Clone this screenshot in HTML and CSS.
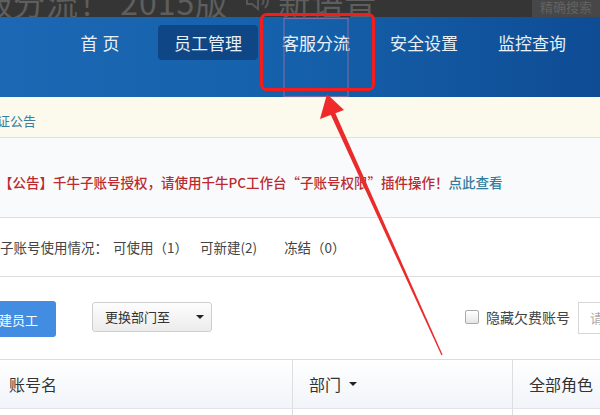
FILE: index.html
```html
<!DOCTYPE html>
<html lang="zh-CN">
<head>
    <meta charset="utf-8">
    <title>员工管理</title>
    <link rel="stylesheet" href="styles.css">
</head>
<body>
    <div class="topbar">
        <div class="topbar-title">
            服分流！ 2015版
            <svg class="speaker" width="28" height="20" viewBox="0 0 28 20">
                <path d="M3 7h5l6-5v16l-6-5H3z" fill="none" stroke="#585858" stroke-width="2"/>
                <path d="M18 6q3 4 0 8M21 3q6 7 0 14" fill="none" stroke="#585858" stroke-width="2"/>
            </svg>
            新语音
        </div>
        <div class="topbar-box">精确搜索</div>
    </div>

    <div class="nav">
        <a class="nav-item nav-home">首页</a>
        <a class="nav-item active">员工管理</a>
        <a class="nav-item">客服分流</a>
        <a class="nav-item">安全设置</a>
        <a class="nav-item">监控查询</a>
    </div>

    <div class="notice-bar">验证公告</div>

    <div class="announce">
        <span class="announce-red">【公告】千牛子账号授权，请使用千牛PC工作台“子账号权限”插件操作！</span><a class="announce-link">点此查看</a>
    </div>

    <div class="usage">
        <span class="usage-label">子账号使用情况：</span>
        <span class="usage-item usable">可使用（1）</span>
        <span class="usage-item creatable">可新建(2)</span>
        <span class="usage-item frozen">冻结（0）</span>
    </div>

    <div class="toolbar">
        <button class="btn-primary">新建员工</button>
        <div class="select">更换部门至<span class="caret"></span></div>
        <label class="check">
            <span class="check-box"></span>
            隐藏欠费账号
        </label>
        <div class="search-input">请输入账号</div>
    </div>

    <div class="table">
        <div class="table-head">
            <div class="col col-name">账号名</div>
            <div class="col col-dept">部门<span class="caret"></span></div>
            <div class="col col-role">全部角色</div>
        </div>
        <div class="table-row">
            <div class="col col-name"></div>
            <div class="col col-dept"></div>
            <div class="col col-role"></div>
        </div>
    </div>

    <!-- annotation drawn over the screenshot -->
    <svg class="annotation" width="600" height="415" viewBox="0 0 600 415">
        <rect x="284" y="18.5" width="64" height="78" fill="none" stroke="#8e6f9f" stroke-width="1.2" opacity="0.8"/>
        <rect x="261.5" y="14.5" width="112" height="75" rx="5" fill="none" stroke="#f21d1d" stroke-width="3"/>
        <polygon points="329,111 333.5,109 442.6,354.7 441.4,355.3" fill="#ea2b2b"/>
        <polygon points="327,94 344,110 320,119" fill="#f02a2a"/>
    </svg>
</body>
</html>
```

FILE: styles.css
```css
body {
    margin: 0;
    width: 600px;
    height: 415px;
    overflow: hidden;
    position: relative;
    font-family: "Noto Sans CJK SC", "Noto Sans", sans-serif;
    background-color: #fff;
}
.topbar {
    height: 17px;
    background-color: #353535;
    display: flex;
    overflow: hidden;
}
.topbar-title {
    flex: 1;
    font-size: 32px;
    line-height: 32px;
    letter-spacing: 1px;
    color: #5e5e5e;
    margin-top: -15px;
    margin-left: -20px;
    white-space: nowrap;
    display: flex;
    align-items: center;
}
.speaker {
    margin: 0 6px 0 16px;
    flex-shrink: 0;
}
.topbar-box {
    width: 60px;
    flex-shrink: 0;
    background-color: #474747;
    color: #626262;
    font-size: 13px;
    line-height: 14px;
    padding-left: 8px;
    white-space: nowrap;
    overflow: hidden;
}
.nav {
    height: 80px;
    box-sizing: border-box;
    padding: 8px 0 0 46px;
    display: flex;
    align-items: flex-start;
    background: linear-gradient(90deg, #1c68b4 0%, #1560aa 50%, #0e4c94 100%);
}
.nav-item {
    width: 100px;
    flex-shrink: 0;
    margin: 0 4px;
    height: 35px;
    line-height: 35px;
    text-align: center;
    font-size: 17px;
    color: #e8eff7;
    border-radius: 4px;
}
.nav-home {
    letter-spacing: 5px;
    text-indent: 5px;
}
.nav-item.active {
    background-color: #0f4786;
}
.notice-bar {
    height: 41px;
    box-sizing: border-box;
    padding-top: 14px;
    line-height: 20px;
    font-size: 13px;
    color: #3a7ea6;
    background-color: #fcfaec;
    border-bottom: 1px solid #e2e0d2;
    margin-left: -16px;
}
.announce {
    height: 80px;
    box-sizing: border-box;
    padding-top: 34px;
    line-height: 20px;
    font-size: 13.5px;
    font-weight: 500;
    background-color: #f9fafb;
    border-bottom: 1px solid #dedede;
    white-space: nowrap;
}
.announce-red {
    color: #bb2a30;
    margin-left: -1px;
}
.announce-link {
    color: #2f7ea0;
}
.usage {
    height: 59px;
    box-sizing: border-box;
    padding-top: 19px;
    line-height: 20px;
    font-size: 13.5px;
    color: #444;
    border-bottom: 1px solid #dedede;
    display: flex;
    white-space: nowrap;
}
.usable {
    margin-left: 5px;
}
.creatable {
    margin-left: 12px;
}
.frozen {
    margin-left: 27px;
}
.toolbar {
    height: 82px;
    box-sizing: border-box;
    padding-top: 24px;
    display: flex;
    align-items: flex-start;
    white-space: nowrap;
}
.toolbar > * {
    flex-shrink: 0;
}
.btn-primary {
    margin-left: -32px;
    height: 36px;
    padding: 0 18px;
    border: none;
    border-radius: 3px;
    background-color: #428ce2;
    color: #fff;
    font-family: inherit;
    font-size: 13px;
}
.select {
    margin-left: 36px;
    margin-top: 1px;
    width: 120px;
    height: 30px;
    box-sizing: border-box;
    padding-left: 12px;
    line-height: 28px;
    font-size: 13px;
    color: #333;
    border: 1px solid #cfcfcf;
    border-radius: 3px;
    background: linear-gradient(#fdfdfd, #ececec);
    display: flex;
    align-items: center;
}
.caret {
    display: inline-block;
    width: 0;
    height: 0;
    border-left: 4px solid transparent;
    border-right: 4px solid transparent;
    border-top: 4px solid #222;
}
.select .caret {
    margin-left: 26px;
}
.check {
    margin-left: 253px;
    margin-top: 6px;
    display: flex;
    align-items: center;
    font-size: 14px;
    color: #444;
}
.check-box {
    width: 12px;
    height: 12px;
    border: 1px solid #aaa;
    border-radius: 2px;
    background: linear-gradient(#fff, #e6e6e6);
    margin-right: 7px;
}
.search-input {
    margin-left: 8px;
    margin-top: 1px;
    width: 140px;
    height: 32px;
    box-sizing: border-box;
    border: 1px solid #d6d6d6;
    padding-left: 11px;
    line-height: 30px;
    font-size: 13px;
    color: #aaa;
}
.table-head {
    height: 48px;
    display: flex;
    border-top: 1px solid #dcdcdc;
    border-bottom: 1px solid #e0e4ea;
    background: linear-gradient(#ffffff, #f1f4f9);
    font-size: 16px;
    color: #333;
}
.table-row {
    height: 30px;
    display: flex;
}
.col {
    display: flex;
    align-items: center;
    box-sizing: border-box;
    flex-shrink: 0;
}
.col-name {
    width: 293px;
    padding-left: 9px;
    border-right: 1px solid #dedede;
}
.col-dept {
    width: 220px;
    padding-left: 16px;
    border-right: 1px solid #dedede;
}
.col-dept .caret {
    margin-left: 8px;
}
.col-role {
    width: 120px;
    padding-left: 16px;
    white-space: nowrap;
}
.annotation {
    position: absolute;
    top: 0;
    left: 0;
    pointer-events: none;
}
```
